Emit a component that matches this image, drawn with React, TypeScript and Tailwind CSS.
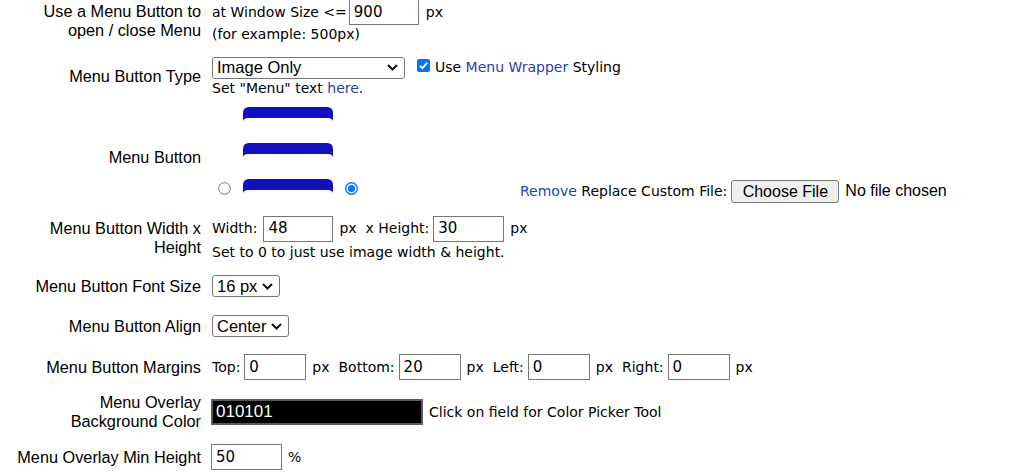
import React from "react";

const labelFont = "font-['Liberation_Sans',Arial,sans-serif] text-[16.3px] text-black";
const valueFont = "font-['DejaVu_Sans',Verdana,sans-serif] text-[14px] text-black";
const linkCls = "text-[#2a40ad]";

// plain text input box
const Box = ({ value, w, cls = "" }: { value: string; w: string; cls?: string }) => (
    <div className={`${w} h-[26px] border border-[#767676] bg-white pl-[4px] flex items-center font-['DejaVu_Sans',sans-serif] text-[15px] text-black ${cls}`}>
        {value}
    </div>
)

const Chevron = () => (
    <svg width="11" height="7" viewBox="0 0 11 7">
        <path d="M1 1 L5.5 5.5 L10 1" fill="none" stroke="#111" strokeWidth="2" />
    </svg>
)

const Select = ({ value, w }: { value: string; w: string }) => (
    <div className={`${w} h-[22px] border border-[#767676] rounded-[3px] bg-white flex items-center justify-between pl-[4px] pr-[6px] font-['Liberation_Sans',Arial,sans-serif] text-[16.5px] text-black`}>
        <span>{value}</span>
        <Chevron />
    </div>
)

const Radio = ({ on }: { on?: boolean }) => (
    <svg width="13" height="13" viewBox="0 0 13 13">
        {on ? (
            <>
                <circle cx="6.5" cy="6.5" r="5.8" fill="#fff" stroke="#0075ff" strokeWidth="1.4" />
                <circle cx="6.5" cy="6.5" r="3.6" fill="#0075ff" />
            </>
        ) : (
            <circle cx="6.5" cy="6.5" r="5.8" fill="#fff" stroke="#767676" strokeWidth="1" />
        )}
    </svg>
)

const Hamburger = () => {
    const bar = (y: number) =>
        `M0 ${y + 14} L0 ${y + 6} Q0 ${y} 6 ${y} L84 ${y} Q90 ${y} 90 ${y + 6} L90 ${y + 14} Q89 ${y + 11} 85 ${y + 11} L5 ${y + 11} Q1 ${y + 11} 0 ${y + 14} Z`
    return (
        <svg width="90" height="86" viewBox="0 0 90 86">
            {[0, 36, 72].map((y) => (
                <path key={y} d={bar(y)} fill="#1010bf" />
            ))}
        </svg>
    )
}

const Label = ({ children }: { children: React.ReactNode }) => (
    <div className={`w-[201px] shrink-0 text-right leading-[19px] ${labelFont}`}>{children}</div>
)

export default function App() {
    return (
        <div className="w-[1025px] h-[475px] overflow-hidden bg-white">
            <div className="flex flex-col -mt-[5px]">
                {/* window size */}
                <div className="flex items-center h-[52px]">
                    <Label>Use a Menu Button to<br />open / close Menu</Label>
                    <div className={`pl-[11px] ${valueFont}`}>
                        <div className="flex items-center h-[26px]">
                            <span>at Window Size &lt;=</span>
                            <Box value="900" w="w-[70px]" cls="ml-[2px]" />
                            <span className="ml-[7px]">px</span>
                        </div>
                        <div className="leading-[17px] mt-[1px]">(for example: 500px)</div>
                    </div>
                </div>

                {/* button type */}
                <div className="flex items-center h-[59px]">
                    <Label>Menu Button Type</Label>
                    <div className={`pl-[11px] ${valueFont}`}>
                        <div className="flex items-center h-[22px]">
                            <Select value="Image Only" w="w-[193px]" />
                            <div className="ml-[12px] w-[13px] h-[13px] rounded-[2px] bg-[#0075ff] flex items-center justify-center -mt-[4px]">
                                <svg width="11" height="11" viewBox="0 0 11 11">
                                    <path d="M2 5.8 L4.5 8.2 L9.3 2.6" fill="none" stroke="#fff" strokeWidth="1.8" />
                                </svg>
                            </div>
                            <span className="ml-[5px]">Use <span className={linkCls}>Menu Wrapper</span> Styling</span>
                        </div>
                        <div className="leading-[17px] mt-[1px]">Set "Menu" text <span className={linkCls}>here</span>.</div>
                    </div>
                </div>

                {/* button image */}
                <div className="flex h-[102px]">
                    <div className="self-center"><Label>Menu Button</Label></div>
                    <div className={`pl-[11px] pt-[1px] flex items-start ${valueFont}`}>
                        <div className="ml-[6px] mt-[75px]"><Radio /></div>
                        <div className="ml-[12px]"><Hamburger /></div>
                        <div className="ml-[12px] mt-[75px]"><Radio on /></div>
                        <div className="ml-[162px] mt-[76px] leading-[17px]">
                            <span className={linkCls}>Remove</span> Replace Custom File:
                        </div>
                        <div className="ml-[4px] mt-[73px] w-[108px] h-[23px] border border-[#767676] rounded-[3px] bg-[#efefef] flex items-center justify-center font-['Liberation_Sans',Arial,sans-serif] text-[16px]">
                            Choose File
                        </div>
                        <div className="ml-[6px] mt-[75px] leading-[18px] font-['Liberation_Sans',Arial,sans-serif] text-[16px]">No file chosen</div>
                    </div>
                </div>

                {/* width x height */}
                <div className="flex items-center h-[60px]">
                    <Label>Menu Button Width x<br />Height</Label>
                    <div className={`pl-[11px] ${valueFont}`}>
                        <div className="flex items-center h-[26px]">
                            <span>Width:</span>
                            <Box value="48" w="w-[70px]" cls="ml-[6px]" />
                            <span className="ml-[6px]">px</span>
                            <span className="ml-[9px]">x Height:</span>
                            <Box value="30" w="w-[71px]" cls="ml-[4px]" />
                            <span className="ml-[6px]">px</span>
                        </div>
                        <div className="leading-[17px] mt-[2px]">Set to 0 to just use image width &amp; height.</div>
                    </div>
                </div>

                {/* font size */}
                <div className="flex items-center h-[36px]">
                    <Label>Menu Button Font Size</Label>
                    <div className="pl-[11px]">
                        <Select value="16 px" w="w-[68px]" />
                    </div>
                </div>

                {/* align */}
                <div className="flex items-center h-[44px]">
                    <Label>Menu Button Align</Label>
                    <div className="pl-[11px]">
                        <Select value="Center" w="w-[77px]" />
                    </div>
                </div>

                {/* margins */}
                <div className="flex items-center h-[38px]">
                    <Label>Menu Button Margins</Label>
                    <div className={`pl-[11px] flex items-center ${valueFont}`}>
                        {[
                            ["Top:", "0"],
                            ["Bottom:", "20"],
                            ["Left:", "0"],
                            ["Right:", "0"],
                        ].map(([name, val], i) => (
                            <div key={name} className={`flex items-center ${i > 0 ? "ml-[9px]" : ""}`}>
                                <span>{name}</span>
                                <Box value={val} w="w-[62px]" cls="ml-[4px]" />
                                <span className="ml-[6px]">px</span>
                            </div>
                        ))}
                    </div>
                </div>

                {/* overlay colour */}
                <div className="flex items-center h-[52px]">
                    <Label>Menu Overlay<br />Background Color</Label>
                    <div className={`pl-[10px] flex items-center ${valueFont}`}>
                        <div className="w-[212px] h-[26px] border-2 border-[#5a5a5a] bg-black pl-[3px] flex items-center font-['Liberation_Sans',Arial,sans-serif] text-[17px] text-white">
                            010101
                        </div>
                        <span className="ml-[6px]">Click on field for Color Picker Tool</span>
                    </div>
                </div>

                {/* min height */}
                <div className="flex items-center h-[38px]">
                    <Label>Menu Overlay Min Height</Label>
                    <div className={`pl-[10px] flex items-center ${valueFont}`}>
                        <Box value="50" w="w-[71px]" />
                        <span className="ml-[6px]">%</span>
                    </div>
                </div>
            </div>
        </div>
    )
}
